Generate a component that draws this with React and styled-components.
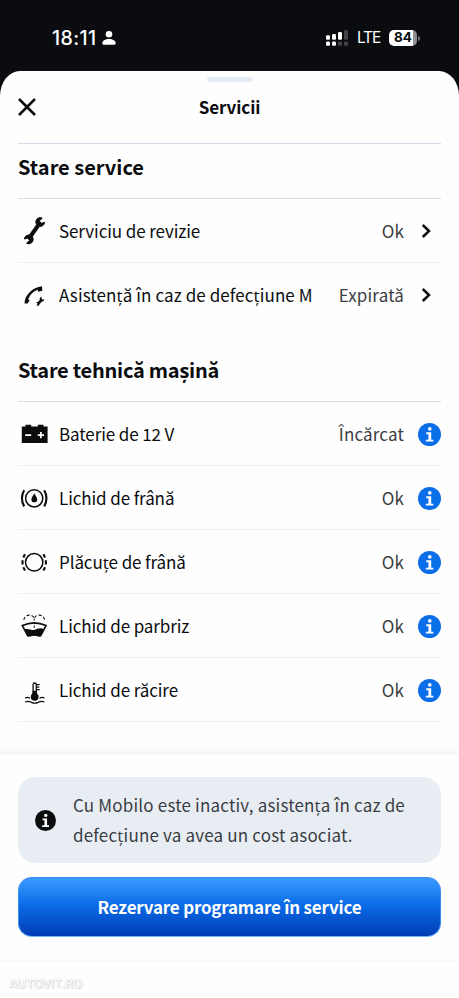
import React from "react";
import styled, { createGlobalStyle } from "styled-components";

const GlobalStyle = createGlobalStyle`
  * {
    box-sizing: border-box;
  }

  body {
    margin: 0;
    background: #0a0c0f;
    font-family: "Noto Sans CJK SC", "Open Sans", sans-serif;
    color: #0b0c0e;
  }
`;

const Screen = styled.div`
  display: flex;
  flex-direction: column;
  width: 459px;
  height: 998px;
  overflow: hidden;
  background: #0a0c0f;
`;

const StatusBar = styled.header`
  display: flex;
  align-items: center;
  height: 71px;
  padding: 4px 42px 0 52px;
  color: #fff;
  font-family: Inter, sans-serif;
`;

const Clock = styled.span`
  font-size: 19.5px;
  font-weight: 500;
  letter-spacing: 0.4px;
  margin-right: 6px;
`;

const Network = styled.span`
  margin: 0 9px 0 8px;
  font-size: 15.5px;
  letter-spacing: -1.2px;
`;

const Signal = styled.svg`
  margin-left: auto;
`;

const Battery = styled.div`
  position: relative;
  display: flex;
  align-items: center;
  justify-content: center;
  width: 28px;
  height: 16px;
  padding-bottom: 1px;
  border-radius: 5px;
  background: linear-gradient(90deg, #fff 84%, #8d8e90 84%);
  color: #0a0c0f;
  font-size: 13.5px;
  font-weight: 700;

  &::after {
    content: "";
    position: absolute;
    top: 6px;
    right: -3px;
    width: 2px;
    height: 5px;
    border-radius: 0 2px 2px 0;
    background: #737476;
  }
`;

const Sheet = styled.main`
  display: flex;
  flex: 1;
  flex-direction: column;
  border-radius: 20px 20px 0 0 / 25px 25px 0 0;
  background: #fefefe;
`;

const Handle = styled.div`
  align-self: center;
  width: 46px;
  height: 5px;
  margin-top: 6px;
  border-radius: 3px;
  background: #e7edf4;
`;

const TitleBar = styled.div`
  display: grid;
  grid-template-columns: 60px 1fr 60px;
  align-items: center;
  height: 50px;
`;

const CloseButton = styled.button`
  display: flex;
  padding: 0 0 0 18px;
  border: 0;
  background: none;
`;

const Title = styled.h1`
  margin: 0;
  padding-bottom: 1px;
  font-size: 17px;
  font-weight: 700;
  line-height: 24px;
  letter-spacing: -0.1px;
  text-align: center;
`;

const Content = styled.div`
  flex: 1;
  padding: 11px 18px 0;
`;

const Section = styled.section`
  border-top: ${(props) => (props.$ruled ? "1px solid #d9dbe9" : "0")};
  margin-bottom: ${(props) => props.$gap || "0"};
`;

const Heading = styled.h2`
  display: flex;
  align-items: center;
  height: ${(props) => props.$height};
  margin: 0;
  padding-bottom: ${(props) => props.$lift};
  border-bottom: 1px solid #d9dbe9;
  font-size: 20px;
  font-weight: 700;
  letter-spacing: ${(props) => props.$spacing || "0"};
`;

const Row = styled.div`
  display: flex;
  align-items: center;
  height: 64px;
  border-bottom: 1px solid ${(props) => (props.$last ? "transparent" : "#efeff2")};
  font-size: 17px;
`;

const Label = styled.span`
  margin-left: 9px;
  padding-bottom: 1px;
  letter-spacing: ${(props) => props.$spacing || "-0.1px"};
  white-space: nowrap;
`;

const Value = styled.span`
  margin-left: auto;
  margin-right: 14px;
  padding-bottom: 1px;
  color: #3b3d42;
  letter-spacing: 0.15px;
`;

const Chevron = styled.svg`
  margin: 0 5px 0 -2px;
`;

const Footer = styled.footer`
  height: 244px;
  padding: 23px 18px 0;
  background: #fefefe;
  box-shadow: 0 -3px 6px rgba(0, 0, 0, 0.05);
`;

const Notice = styled.div`
  display: flex;
  align-items: center;
  height: 86px;
  padding-left: 17px;
  border-radius: 18px;
  background: #e8edf4;
`;

const NoticeText = styled.p`
  margin: 0 0 0 17px;
  color: #3a3d43;
  font-size: 17px;
  line-height: 30px;
  letter-spacing: 0.18px;
  white-space: nowrap;
`;

const BookButton = styled.button`
  display: block;
  width: 100%;
  height: 60px;
  margin-top: 14px;
  padding: 0 0 2px;
  border: 1px solid #3c8cf0;
  border-bottom-color: #74b4fa;
  border-radius: 14px;
  background: linear-gradient(180deg, #3b9bff 0%, #0b6de8 45%, #003cb4 100%);
  color: #fff;
  font-family: inherit;
  font-size: 17px;
  font-weight: 700;
  letter-spacing: -0.2px;
`;

const BottomStrip = styled.div`
  margin: 23px -18px 0;
  padding: 13px 9px 0;
  border-top: 1px solid #f8f8f9;
`;

const Watermark = styled.span`
  display: block;
  color: #fefefe;
  font-family: Inter, sans-serif;
  font-size: 12px;
  font-weight: 500;
  line-height: 20px;
  text-shadow: 0 0 1px #b4b4b4, 1px 1px 1px #dcdcdc;
`;

function Icon({ children }) {
  return (
    <svg width="32" height="32" viewBox="0 0 32 32" fill="none" stroke="#0b0c0e">
      {children}
    </svg>
  );
}

function WrenchIcon() {
  return (
    <Icon>
      <path d="M11 23.5 21.8 8" strokeWidth="4" />
      <path d="M24.2 3.1A4.4 4.4 0 1 0 26.6 7.4l-3.3.9-2-2.4z" fill="#0b0c0e" strokeWidth="1" />
      <path d="M8.6 28.2A4.4 4.4 0 1 0 6.4 24l3.2-1 2 2.5z" fill="#0b0c0e" strokeWidth="1" />
    </Icon>
  );
}

function AssistanceIcon() {
  return (
    <Icon>
      <path
        d="M6.6 24.6c-.6-7.6 7.8-16.4 17.4-17.3l.3 4.4-4.2 1-.4-1.9c-4.6 1.7-8 5.3-9.6 9.6l1.6.6-2 3.5z"
        fill="#0b0c0e"
        stroke="none"
      />
      <path d="m20.4 24.2 2.6-2.4" strokeWidth="2.6" />
      <path
        d="M23.6 17.6c-1.6.6-2.5 2.4-1.7 3.9s3 1.7 4 .1l.3-1.6-1.5.7-1.2-1.2zM21 26.4c.9-1 .6-2.4-.3-3.1s-2-.5-2.7.4l1.4.5.1 1.3-1.3.6c.9.8 2 1 2.8.3z"
        fill="#0b0c0e"
        stroke="none"
      />
    </Icon>
  );
}

function BatteryIcon() {
  return (
    <Icon>
      <path d="M3.8 8.6h3.7V6.8h5.7v1.8h6.6V6.8h5.7v1.8h4.1V25H3.8z" fill="#0b0c0e" stroke="none" />
      <path d="M7.2 17.2h6M19.8 17.2H26M22.9 14.1v6.2" stroke="#fff" strokeWidth="1.7" />
    </Icon>
  );
}

function BrakeFluidIcon() {
  return (
    <Icon>
      <circle cx="16.2" cy="16.3" r="8.6" strokeWidth="1.5" />
      <path d="M6.2 8.2c-3 4.8-3 11.4 0 16.2M26.2 8.2c3 4.8 3 11.4 0 16.2" strokeWidth="2.1" />
      <path d="M16.3 11.2c.7 2.2 2.9 4 2.9 6.2a2.9 2.9 0 0 1-5.8 0c0-2.2 2.2-4 2.9-6.2z" fill="#0b0c0e" stroke="none" />
    </Icon>
  );
}

function BrakePadsIcon() {
  return (
    <Icon>
      <circle cx="16.2" cy="16.3" r="8.7" strokeWidth="1.5" />
      <path
        d="M7 8.2 5.3 11.4M4.5 14.2v4.2M5.3 21.2 7 24.4M25.4 8.2l1.7 3.2M27.9 14.2v4.2M27.1 21.2l-1.7 3.2"
        strokeWidth="2.1"
      />
    </Icon>
  );
}

function WasherIcon() {
  return (
    <Icon>
      <path d="M4.4 15.6Q16.2 10.2 28 15.6L22.6 25.8Q16.2 24.2 9.8 25.8z" strokeWidth="1.7" />
      <path
        d="M6.6 19.4c3.8-1.4 6.8 1.4 10 .5 2.6-.8 5-2.6 9-.9L22.4 26.6h-3.2l-.6-1h-4.8l-.6 1H10z"
        fill="#0b0c0e"
        stroke="none"
      />
      <path d="M16.2 8.6v9.2" strokeWidth="1.1" strokeDasharray="2 1.6" />
      <path d="M5.8 9.8C6.8 4 14.8 3.6 16.2 8.6C17.6 3.6 25.6 4 26.6 9.8" strokeWidth="1.1" strokeDasharray="3 2" />
    </Icon>
  );
}

function CoolantIcon() {
  return (
    <Icon>
      <path d="M15.1 20.5V10.6q0-1.6 1.6-1.6t1.6 1.6v9.9" strokeWidth="1.3" />
      <path d="M16.7 16.8v5" strokeWidth="4" />
      <circle cx="16.7" cy="22.8" r="3.9" fill="#0b0c0e" stroke="none" />
      <path d="M18.3 10.7h3.4M18.3 13.2h3M18.3 15.7h3.4" strokeWidth="1.3" />
      <path
        d="M7.2 24.1c1.8-1 3.3-.8 4.8.2M21.6 24.3c1.5-1 3-1.2 4.8-.2M7.2 28c3-1.6 4.5-.6 6.2.3 2.2 1.1 4.6 1.1 6.8 0 1.7-.9 3.2-1.9 6.2-.3"
        strokeWidth="1.3"
      />
    </Icon>
  );
}

const Badge = styled.svg`
  margin-top: ${(props) => props.$drop || "0"};
`;

function InfoIcon({ size, color, drop }) {
  return (
    <Badge width={size} height={size} viewBox="0 0 24 24" $drop={drop}>
      <circle cx="12" cy="12" r="12" fill={color} />
      <circle cx="12.3" cy="6.2" r="1.9" fill="#fff" />
      <path d="M8.6 9.7h5.2v7.7H16v2H8.2v-2h2.6v-5.7H8.6z" fill="#fff" />
    </Badge>
  );
}

function ChevronIcon() {
  return (
    <Chevron width="20" height="20" viewBox="0 0 20 20" fill="none" stroke="#0b0c0e" strokeWidth="2.5">
      <path d="m6.8 4 6.2 6-6.2 6" />
    </Chevron>
  );
}

const services = [
  { icon: WrenchIcon, label: "Serviciu de revizie", value: "Ok" },
  { icon: AssistanceIcon, label: "Asistență în caz de defecțiune M", value: "Expirată", spacing: "0.09px" },
];

const checks = [
  { icon: BatteryIcon, label: "Baterie de 12 V", value: "Încărcat" },
  { icon: BrakeFluidIcon, label: "Lichid de frână", value: "Ok" },
  { icon: BrakePadsIcon, label: "Plăcuțe de frână", value: "Ok" },
  { icon: WasherIcon, label: "Lichid de parbriz", value: "Ok" },
  { icon: CoolantIcon, label: "Lichid de răcire", value: "Ok" },
];

function App() {
  return (
    <Screen>
      <GlobalStyle />
      <StatusBar>
        <Clock>18:11</Clock>
        <svg width="14" height="14" viewBox="0 0 14 14" fill="#fff">
          <circle cx="7" cy="3.3" r="3.3" />
          <path d="M.3 12.3C.3 9.6 3.2 8 7 8s6.7 1.6 6.7 4.3c0 .9-.4 1.4-1.2 1.4h-11c-.8 0-1.2-.5-1.2-1.4z" />
        </svg>
        <Signal width="23" height="16" viewBox="0 0 23 16" fill="#fff">
          <rect x="0" y="5.3" width="4" height="4.4" rx="1.2" />
          <rect x="6" y="4" width="4" height="5.7" rx="1.2" />
          <rect x="12" y="2" width="4" height="7.7" rx="1.2" />
          <rect x="18" y="0" width="4" height="9.7" rx="1.2" fill="#424346" />
          <rect x="0" y="11.6" width="4" height="4.2" rx="1.2" />
          <rect x="6" y="11.6" width="4" height="4.2" rx="1.2" />
          <rect x="12" y="11.6" width="4" height="4.2" rx="1.2" fill="#424346" />
          <rect x="18" y="11.6" width="4" height="4.2" rx="1.2" fill="#424346" />
        </Signal>
        <Network>LTE</Network>
        <Battery>84</Battery>
      </StatusBar>
      <Sheet>
        <Handle />
        <TitleBar>
          <CloseButton aria-label="Închide">
            <svg width="18" height="18" viewBox="0 0 18 18" stroke="#0b0c0e" strokeWidth="2.5">
              <path d="m1 1 16 16M17 1 1 17" />
            </svg>
          </CloseButton>
          <Title>Servicii</Title>
        </TitleBar>
        <Content>
          <Section $ruled $gap="16px">
            <Heading $height="55px" $lift="9px">
              Stare service
            </Heading>
            {services.map(({ icon: RowIcon, label, value, spacing }, i) => (
              <Row key={label} $last={i === services.length - 1}>
                <RowIcon />
                <Label $spacing={spacing}>{label}</Label>
                <Value>{value}</Value>
                <ChevronIcon />
              </Row>
            ))}
          </Section>
          <Section>
            <Heading $height="59px" $lift="5px" $spacing="-0.25px">
              Stare tehnică mașină
            </Heading>
            {checks.map(({ icon: RowIcon, label, value }) => (
              <Row key={label}>
                <RowIcon />
                <Label>{label}</Label>
                <Value>{value}</Value>
                <InfoIcon size={23} color="#0a6ee8" drop="2px" />
              </Row>
            ))}
          </Section>
        </Content>
        <Footer>
          <Notice>
            <InfoIcon size={21} color="#0b0c0e" />
            <NoticeText>
              Cu Mobilo este inactiv, asistența în caz de
              <br />
              defecțiune va avea un cost asociat.
            </NoticeText>
          </Notice>
          <BookButton>Rezervare programare în service</BookButton>
          <BottomStrip>
            <Watermark>AUTOVIT.RO</Watermark>
          </BottomStrip>
        </Footer>
      </Sheet>
    </Screen>
  );
}

export default App;
